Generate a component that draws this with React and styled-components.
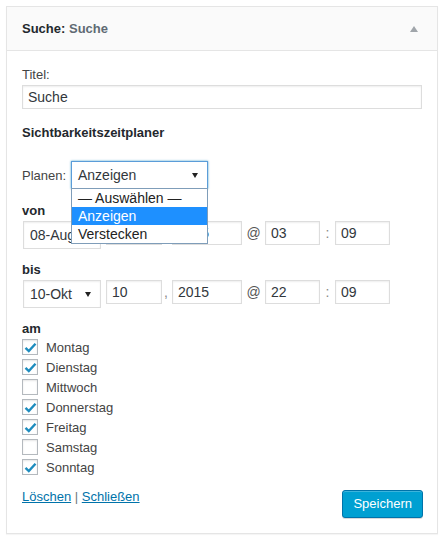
import React from 'react';
import styled, { createGlobalStyle } from 'styled-components';

const GlobalStyle = createGlobalStyle`
  body {
    margin: 0;
    background: #fff;
    font-family: "Liberation Sans", Arial, sans-serif;
    font-size: 13px;
    color: #444;
  }
`;

const Widget = styled.div`
  margin: 6px;
  width: 430px;
  border: 1px solid #e5e5e5;
  box-shadow: 0 1px 1px rgba(0,0,0,0.04);
  background: #fff;
`;

const WidgetTop = styled.div`
  height: 43px;
  display: flex;
  align-items: center;
  justify-content: space-between;
  padding: 0 19px 0 15px;
  background: #fafafa;
  border-bottom: 1px solid #e5e5e5;
`;

const Title = styled.h3`
  margin: 0;
  font-size: 13px;
  font-weight: bold;
  color: #23282d;
`;

const InTitle = styled.span`
  color: #606a73;
`;

const Toggle = styled.span`
  width: 0;
  height: 0;
  border-left: 4px solid transparent;
  border-right: 4px solid transparent;
  border-bottom: 6px solid #a0a5aa;
`;

const Inside = styled.div`
  padding: 15px 15px 15px;
`;

const Label = styled.div`
  line-height: 18px;
  font-weight: ${p => (p.$bold ? 'bold' : 'normal')};
  color: ${p => (p.$bold ? '#23282d' : '#444')};
  margin-top: ${p => p.$top || 0}px;
`;

const TextInput = styled.input`
  box-sizing: border-box;
  display: block;
  width: ${p => p.$w || 400}px;
  height: 24px;
  margin: ${p => (p.$block ? '1px 0 0' : '0')};
  padding: 0 4px 0 5px;
  border: 1px solid #ddd;
  box-shadow: inset 0 1px 2px rgba(0,0,0,0.07);
  font-family: "Liberation Sans", Arial, sans-serif;
  font-size: 14px;
  color: #32373c;
  background: #fff;
  outline: none;
`;

const PlanRow = styled.div`
  display: flex;
  align-items: center;
  margin-top: 19px;
  position: relative;
`;

const PlanLabel = styled.span`
  width: 49px;
  color: #444;
`;

const SelectBox = styled.div`
  box-sizing: border-box;
  position: relative;
  width: ${p => p.$w}px;
  height: 28px;
  margin-left: ${p => p.$ml || 0}px;
  padding-left: 6px;
  display: flex;
  align-items: center;
  border: 1px solid ${p => (p.$focus ? '#5b9dd9' : '#ddd')};
  box-shadow: ${p => (p.$focus ? '0 0 2px rgba(30,140,190,0.8)' : 'inset 0 1px 2px rgba(0,0,0,0.07)')};
  background: #fff;
  font-size: 14px;
  color: #32373c;
  flex-shrink: 0;

  &::after {
    content: "";
    position: absolute;
    right: 9px;
    top: 50%;
    margin-top: -2px;
    border-left: 3.5px solid transparent;
    border-right: 3.5px solid transparent;
    border-top: 5px solid #222;
  }
`;

const DropList = styled.ul`
  position: absolute;
  left: 49px;
  top: 27px;
  width: 137px;
  box-sizing: border-box;
  margin: 0;
  padding: 0;
  list-style: none;
  border: 1px solid #7f9db9;
  background: #fff;
  z-index: 5;
`;

const Option = styled.li`
  height: 18px;
  line-height: 18px;
  padding-left: 6px;
  font-size: 14px;
  color: ${p => (p.$active ? '#fff' : '#222')};
  background: ${p => (p.$active ? '#1e90ff' : '#fff')};
`;

const DateRow = styled.div`
  display: flex;
  align-items: flex-start;
  margin-top: 1px;
`;

const Sep = styled.span`
  width: ${p => p.$w}px;
  line-height: 24px;
  text-align: ${p => p.$align || 'center'};
  padding-left: ${p => p.$pl || 0}px;
  box-sizing: border-box;
  font-size: 14px;
  color: ${p => p.$c || '#555'};
`;

const Days = styled.div`
  margin-top: -1px;
`;

const DayRow = styled.label`
  display: flex;
  align-items: center;
  height: 20px;
  color: #444;
`;

const Check = styled.span`
  box-sizing: border-box;
  width: 16px;
  height: 16px;
  margin-right: 8px;
  border: 1px solid #b4b9be;
  background: #fff;
  box-shadow: inset 0 1px 2px rgba(0,0,0,0.1);
  display: flex;
  align-items: center;
  justify-content: center;
`;

const Footer = styled.div`
  display: flex;
  justify-content: space-between;
  align-items: flex-start;
  margin-top: 13px;
`;

const Links = styled.div`
  line-height: 18px;
  margin-top: -2px;
  color: #72777c;
`;

const Link = styled.a`
  color: #0073aa;
  text-decoration: underline;
`;

const Button = styled.button`
  box-sizing: border-box;
  height: 28px;
  padding: 0 10px;
  border: 1px solid #0073aa;
  border-radius: 3px;
  background: #00a0d2;
  box-shadow: inset 0 1px 0 rgba(120,200,230,0.5), 0 1px 0 rgba(0,0,0,0.15);
  color: #fff;
  font-family: "Liberation Sans", Arial, sans-serif;
  font-size: 13px;
  line-height: 26px;
  margin-right: -1px;
`;

const CheckMark = () => (
  <svg width="13" height="13" viewBox="0 0 13 13">
    <path d="M1.5 6.8 L4.8 10 L11.5 2.8" fill="none" stroke="#1e8cbe" strokeWidth="2.4" />
  </svg>
);

const days = [
  ['Montag', true],
  ['Dienstag', true],
  ['Mittwoch', false],
  ['Donnerstag', true],
  ['Freitag', true],
  ['Samstag', false],
  ['Sonntag', true],
];

const DateTime = ({ month, day, year, hour, minute }) => (
  <DateRow>
    <SelectBox $w={78} $ml={1}>{month}</SelectBox>
    <TextInput $w={56} style={{ marginLeft: 5 }} defaultValue={day} />
    <Sep $w={10} $align="left" $pl={2} $c="#888">,</Sep>
    <TextInput $w={70} defaultValue={year} />
    <Sep $w={23}>@</Sep>
    <TextInput $w={55} defaultValue={hour} />
    <Sep $w={15} $c="#888">:</Sep>
    <TextInput $w={55} defaultValue={minute} />
  </DateRow>
);

export default function App() {
  return (
    <>
      <GlobalStyle />
      <Widget>
        <WidgetTop>
          <Title>Suche: <InTitle>Suche</InTitle></Title>
          <Toggle />
        </WidgetTop>
        <Inside>
          <Label>Titel:</Label>
          <TextInput $block defaultValue="Suche" />
          <Label $bold $top={15}>Sichtbarkeitszeitplaner</Label>
          <PlanRow>
            <PlanLabel>Planen:</PlanLabel>
            <SelectBox $w={137} $focus>Anzeigen</SelectBox>
            <DropList>
              <Option>— Auswählen —</Option>
              <Option $active>Anzeigen</Option>
              <Option>Verstecken</Option>
            </DropList>
          </PlanRow>
          <Label $bold $top={13}>von</Label>
          <DateTime month="08-Aug" day="08" year="2015" hour="03" minute="09" />
          <Label $bold $top={12}>bis</Label>
          <DateTime month="10-Okt" day="10" year="2015" hour="22" minute="09" />
          <Label $bold $top={12}>am</Label>
          <Days>
            {days.map(([name, on]) => (
              <DayRow key={name}>
                <Check>{on && <CheckMark />}</Check>
                {name}
              </DayRow>
            ))}
          </Days>
          <Footer>
            <Links>
              <Link href="#">Löschen</Link> | <Link href="#">Schließen</Link>
            </Links>
            <Button>Speichern</Button>
          </Footer>
        </Inside>
      </Widget>
    </>
  );
}
